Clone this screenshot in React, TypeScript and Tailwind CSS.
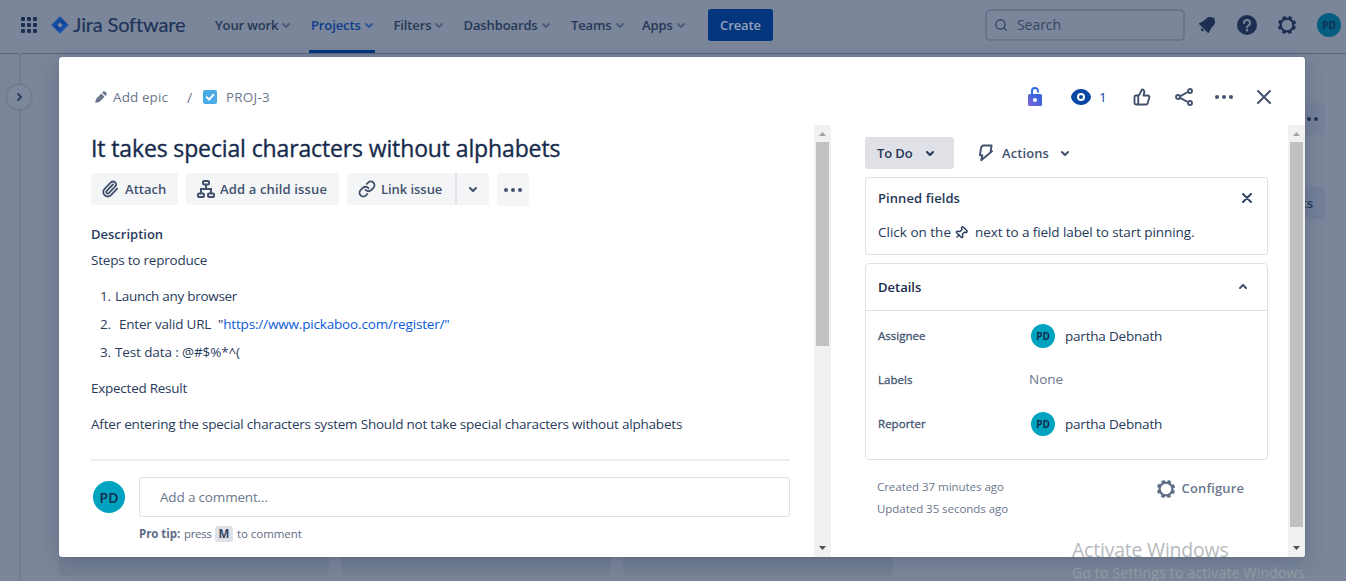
import type { ReactNode } from "react";
import { Link, Paperclip, Pin, Search, ThumbsUp } from "lucide-react";

function Chevron({ className = "", up = false }: { className?: string; up?: boolean }) {
  return (
    <svg viewBox="8 8 8 8" className={`h-2 w-2 shrink-0 fill-current ${up ? "rotate-180" : ""} ${className}`}>
      <path d="M8.292 10.293a1.009 1.009 0 000 1.419l2.939 2.965c.218.215.5.322.779.322s.556-.107.769-.322l2.93-2.955a1.01 1.01 0 000-1.419.987.987 0 00-1.406 0l-2.298 2.317-2.307-2.327a.99.99 0 00-1.406 0z" />
    </svg>
  );
}

function Gear({ className = "" }: { className?: string }) {
  return (
    <svg viewBox="0 0 20 20" className={`h-5 w-5 shrink-0 ${className}`} fill="none" stroke="currentColor">
      <circle cx="10" cy="10" r="6.4" strokeWidth="2.3" />
      <circle cx="10" cy="10" r="8" strokeWidth="2.2" strokeDasharray="3.5 2.783" transform="rotate(10 10 10)" />
    </svg>
  );
}

function Dots({ className = "" }: { className?: string }) {
  return (
    <svg viewBox="0 0 18 4" className={`h-1 w-[18px] shrink-0 fill-current ${className}`}>
      <circle cx="2" cy="2" r="2" />
      <circle cx="9" cy="2" r="2" />
      <circle cx="16" cy="2" r="2" />
    </svg>
  );
}

function NavItem({ width, active, children }: { width: string; active?: boolean; children: ReactNode }) {
  return (
    <div className={`relative flex h-full items-center pb-[3px] ${width} ${active ? "text-[#0c3c8c]" : "text-[#253858]"}`}>
      <span className="pt-0.5 text-[13px] font-semibold">{children}</span>
      <Chevron className={`ml-1 ${active ? "text-[#2d5799]" : "text-[#4d5d7b]"}`} />
      {active && <span className="absolute bottom-0 -left-0.5 h-[3px] w-[66px] bg-[#04357f]" />}
    </div>
  );
}

function TopBar() {
  return (
    <header className="flex h-[53px] items-center pb-[3px] pl-[21px] shadow-[0_1px_1px_rgba(60,72,100,0.45)]">
      <svg viewBox="0 0 16 16" className="h-4 w-4 shrink-0 fill-[#1c2f52]">
        {[0, 6, 12].map((y) => [0, 6, 12].map((x) => <rect key={`${x}-${y}`} x={x} y={y} width="4" height="4" rx="1" />))}
      </svg>
      <svg viewBox="0 0 18 18" className="ml-[14px] h-[18px] w-[18px] shrink-0">
        <defs>
          <linearGradient id="mark" x1="0" y1="0" x2="1" y2="1">
            <stop offset="0.3" stopColor="#144da3" />
            <stop offset="0.5" stopColor="#0c3f92" />
            <stop offset="0.75" stopColor="#1a56b0" />
          </linearGradient>
        </defs>
        <path d="M9 .6 17.4 9 9 17.4.6 9z" fill="url(#mark)" stroke="#1a56b0" strokeWidth=".6" strokeLinejoin="round" />
        <path d="M9 6.3 11.7 9 9 11.7 6.3 9z" fill="#7b869a" />
      </svg>
      <span className="-mt-0.5 ml-[4px] w-[142px] shrink-0 font-['Lato'] text-[20px] leading-6 tracking-[-0.15px] text-[#20345a] [-webkit-text-stroke:0.2px_currentColor]">Jira Software</span>
      <nav className="-mb-[3px] flex h-[53px] shrink-0 items-center tracking-[-0.12px]">
        <NavItem width="w-24">Your work</NavItem>
        <NavItem width="w-[82.5px]" active>Projects</NavItem>
        <NavItem width="w-[70px]">Filters</NavItem>
        <NavItem width="w-[107.5px]">Dashboards</NavItem>
        <NavItem width="w-[71px]">Teams</NavItem>
        <NavItem width="w-[66px]">Apps</NavItem>
      </nav>
      <button className="h-8 w-[65px] shrink-0 rounded-[3px] bg-[#04357f] pt-px text-[13px] font-semibold tracking-[-0.1px] text-[#98a3b8]">Create</button>
      <div className="ml-auto flex h-8 w-[200px] shrink-0 items-center rounded-[5px] border-2 border-[#69758b] pl-[7px] text-[#344563]">
        <Search className="h-[14px] w-[14px]" strokeWidth={2.2} />
        <span className="ml-[9px] pb-px text-[14px] tracking-[-0.06px]">Search</span>
      </div>
      <svg viewBox="0 0 24 24" className="ml-[10px] h-6 w-6 shrink-0 fill-[#1c2f52]">
        <path d="M6.485 17.669a2 2 0 002.829 0l-2.829-2.83a2 2 0 000 2.83zm4.897-12.191l-.725.725c-.782.782-2.21 1.813-3.206 2.311l-3.017 1.509c-.495.248-.584.774-.187 1.171l8.556 8.556c.398.396.922.313 1.171-.188l1.51-3.016c.494-.988 1.526-2.42 2.311-3.206l.725-.726a5.048 5.048 0 00.64-6.356 1.01 1.01 0 10-1.354-1.494c-.023.025-.046.049-.066.075a5.043 5.043 0 00-2.788-.84 5.036 5.036 0 00-3.57 1.478z" />
      </svg>
      <svg viewBox="0 0 20 20" className="ml-[18px] h-5 w-5 shrink-0">
        <circle cx="10" cy="10" r="10" fill="#1c2f52" />
        <path d="M7 8a3 3 0 1 1 4.3 2.7c-.8.4-1.3.8-1.3 1.9" fill="none" stroke="#7b869a" strokeWidth="2" strokeLinecap="round" />
        <circle cx="10" cy="15.3" r="1.2" fill="#7b869a" />
      </svg>
      <Gear className="ml-5 text-[#1c2f52]" />
      <span className="mr-[5px] ml-5 flex h-6 w-6 shrink-0 items-center justify-center rounded-full bg-[#045e7f] text-[10px] font-bold text-[#122c54]">PD</span>
    </header>
  );
}

function Board() {
  return (
    <div className="flex h-[528px]">
      <aside className="relative w-[21px] border-r-2 border-[#717c91]">
        <span className="absolute top-8 left-[7px] flex h-6 w-6 items-center justify-center rounded-full bg-[#7d889c] text-[#2c3e60] shadow-[0_0_2px_1px_rgba(80,92,118,0.4)]">
          <Chevron className="-rotate-90" />
        </span>
      </aside>
      <div className="flex flex-1 flex-col justify-between pr-[21px] pb-[5px] pl-[38px]">
        <div className="mt-[50px] flex flex-col items-end gap-[52px]">
          <span className="flex h-8 w-8 items-center justify-center rounded-[3px] bg-[#768198] text-[#1f3356]"><Dots /></span>
          <span className="flex h-8 w-[70px] items-center justify-end rounded-[3px] bg-[#747f98] pt-0.5 pr-3 text-[13px] font-semibold text-[#253858]">Insights</span>
        </div>
        <div className="flex gap-3">
          {["todo", "progress", "done"].map((c) => <div key={c} className="h-10 w-[270px] rounded-[5px] bg-[#747f93]" />)}
        </div>
      </div>
    </div>
  );
}

function ScrollBar({ thumb }: { thumb: string }) {
  return (
    <div className="flex w-[17px] shrink-0 flex-col items-center bg-[#f1f1f1]">
      <svg viewBox="0 0 17 17" className="h-[17px] w-[17px] shrink-0"><path d="M5 11h7L8.500 7z" fill="#a3a3a3" /></svg>
      <div className={`w-[13px] bg-[#c1c1c1] ${thumb}`} />
      <svg viewBox="0 0 17 17" className="mt-auto h-[17px] w-[17px] shrink-0"><path d="M5 6h7l-3.500 4z" fill="#505050" /></svg>
    </div>
  );
}

function IssueHeader() {
  return (
    <div className="flex h-[68px] shrink-0 items-center pt-3 pl-9 text-[#6b778c]">
      <svg viewBox="0 0 12 12" className="h-3 w-3 fill-current">
        <path d="M1.200 7.700 6.300 2.600l3.200 3.200-5.100 5.100L1 11.800c-.5.1-.8-.2-.7-.7zM7.200 1.700 8.300.6c.5-.5 1.200-.5 1.700 0l1.500 1.500c.5.5.5 1.200 0 1.700l-1.100 1.100z" />
      </svg>
      <span className="ml-1.5 w-[74px] text-[13.5px] tracking-[0.09px]">Add epic</span>
      <span className="w-4 text-[14px]">/</span>
      <svg viewBox="0 0 14 14" className="h-3.5 w-3.5">
        <rect width="14" height="14" rx="2" fill="#4bade8" />
        <path d="m3.800 7.300 2.300 2.300 4.200-4.800" fill="none" stroke="#fff" strokeWidth="2" strokeLinecap="round" strokeLinejoin="round" />
      </svg>
      <span className="ml-[9px] text-[13.5px] tracking-[0.2px]">PROJ-3</span>
      <div className="mr-[34px] ml-auto flex items-center text-[#42526e]">
        <svg viewBox="0 0 14 20" className="h-5 w-3.5">
          <defs>
            <linearGradient id="lock" x1="1" y1="0" x2="0" y2="1">
              <stop offset="0.3" stopColor="#3a63dc" />
              <stop offset="1" stopColor="#8467d8" />
            </linearGradient>
          </defs>
          <path d="M4 8.500V4.200a3 3 0 0 1 6-.3V5.500" fill="none" stroke="#2f6be6" strokeWidth="2" />
          <rect y="7" width="14" height="12" rx="1.500" fill="url(#lock)" />
          <circle cx="7" cy="13" r="2" fill="#fff" />
        </svg>
        <svg viewBox="0 0 20 16" className="ml-[29px] h-4 w-5">
          <path d="M10 0c6 0 10 5.300 10 8s-4 8-10 8S0 10.700 0 8s4-8 10-8z" fill="#0747a6" />
          <circle cx="10" cy="8" r="3" fill="none" stroke="#fff" strokeWidth="2" />
        </svg>
        <span className="ml-2 w-[34px] text-[13.5px] text-[#0747a6]">1</span>
        <ThumbsUp className="h-[18px] w-[18px]" strokeWidth={2.5} />
        <svg viewBox="0 0 18 18" className="ml-6 h-[18px] w-[18px]" fill="none" stroke="currentColor" strokeWidth="1.900">
          <path d="M5 8.300 12.800 4M5 9.800l7.800 4.200" />
          <circle cx="3" cy="9" r="2" /><circle cx="15" cy="3" r="2" /><circle cx="15" cy="15" r="2" />
        </svg>
        <Dots className="ml-[22px]" />
        <svg viewBox="0 0 14 14" className="ml-6 h-3.5 w-3.5" stroke="currentColor" strokeWidth="2" strokeLinecap="round"><path d="m1 1 12 12M13 1 1 13" /></svg>
      </div>
    </div>
  );
}

function IssueMain() {
  return (
    <main className="w-[755px] shrink-0 pr-6 pl-8 text-[13.5px] tracking-[-0.21px] text-[#2a3c5c]">
      <h1 className="flex h-12 items-center pb-0.5 text-[23px] font-medium tracking-[-0.13px] whitespace-nowrap text-[#172b4d] [-webkit-text-stroke:0.35px_currentColor]">It takes special characters without alphabets</h1>
      <div className="flex h-8 text-[13px] font-semibold tracking-[0.05px] text-[#42526e]">
        <button className="flex h-8 w-[87px] items-center rounded-[3px] bg-[#f4f5f7] pl-2.5">
          <Paperclip className="mr-1.5 h-[18px] w-[18px]" strokeWidth={2.4} /><span className="pt-0.5">Attach</span>
        </button>
        <button className="ml-2 flex h-8 w-[153px] items-center rounded-[3px] bg-[#f4f5f7] pl-[11px]">
          <svg viewBox="0 0 18 18" className="mr-[5px] h-[18px] w-[18px]" fill="none" stroke="currentColor" strokeWidth="2">
            <rect x="6" y="1" width="6" height="3.500" rx="1" />
            <rect x="1" y="13.500" width="6" height="3.500" rx="1" />
            <rect x="11" y="13.500" width="6" height="3.500" rx="1" />
            <path d="M9 4.500V9M4 13.500V9h10v4.500" />
          </svg>
          <span className="pt-0.5 tracking-[0.15px]">Add a child issue</span>
        </button>
        <button className="ml-2 flex h-8 w-[108px] items-center rounded-l-[3px] bg-[#f4f5f7] pl-[11px]">
          <Link className="mr-[5px] h-[18px] w-[18px]" strokeWidth={2.5} /><span className="pt-0.5 tracking-[-0.05px]">Link issue</span>
        </button>
        <button className="flex h-8 w-[34px] items-center justify-center rounded-r-[3px] border-l-2 border-[#dfe1e6] bg-[#f4f5f7]"><Chevron /></button>
        <button className="ml-2 flex h-[33px] w-8 items-center justify-center rounded-[3px] bg-[#f4f5f7]"><Dots /></button>
      </div>
      <h2 className="mt-[15px] flex h-7 items-center pt-0.5 text-[13px] font-semibold tracking-[0px]">Description</h2>
      <p className="mt-0.5 h-5 leading-5">Steps to reproduce</p>
      <ol className="mt-3 [&>li]:flex [&>li]:h-7 [&>li]:items-center [&>li>span]:w-6 [&>li>span]:shrink-0 [&>li>span]:pl-[9px]">
        <li><span>1.</span><div className="tracking-[-0.29px]">Launch any browser</div></li>
        <li><span>2.</span><div className="ml-1 w-[99px]">Enter valid URL</div><div className="tracking-[-0.17px]">"<a className="text-[#0b5bd9]">https://www.pickaboo.com/register/"</a></div></li>
        <li><span>3.</span><div className="tracking-[-0.12px]">Test data : @#$%*^(</div></li>
      </ol>
      <p className="mt-3 h-5 leading-5 tracking-[-0.26px]">Expected Result</p>
      <p className="mt-4 h-5 leading-5 whitespace-nowrap">After entering the special characters system Should not take special characters without alphabets</p>
      <div className="mt-[25px] h-0.5 bg-[#ebecf0]" />
      <div className="mt-4 flex items-center pl-0.5">
        <span className="flex h-8 w-8 items-center justify-center rounded-full bg-[#00a3bf] text-[14px] font-semibold tracking-normal text-[#172b4d]">PD</span>
        <div className="ml-3.5 flex h-10 flex-1 items-center rounded-[3px] border border-[#dfe1e6] pl-5 tracking-[-0.17px] text-[#6b778c]">Add a comment…</div>
      </div>
      <div className="mt-[7px] ml-12 flex h-5 items-center text-[11.5px] tracking-[-0.06px] text-[#5e6c84]">
        <b className="w-[45px] font-bold">Pro tip:</b>
        <span className="w-[31px] tracking-[-0.35px]">press</span>
        <b className="flex h-4 w-[18px] items-center justify-center rounded-[3px] bg-[#dfe1e6] text-[#344563]">M</b>
        <span className="ml-1">to comment</span>
      </div>
    </main>
  );
}

function Field({ label, children }: { label: string; children: ReactNode }) {
  return (
    <div className="flex h-11 items-center pl-3">
      <span className="w-[151px] text-[11.5px] font-medium tracking-[0.03px] text-[#42526e] [-webkit-text-stroke:0.3px_currentColor]">{label}</span>
      {children}
    </div>
  );
}

function Person() {
  return (
    <div className="flex items-center pl-0.5 text-[13.5px] tracking-[-0.2px]">
      <span className="mr-2.5 flex h-6 w-6 items-center justify-center rounded-full bg-[#00a3bf] text-[10px] font-bold tracking-normal text-[#172b4d]">PD</span>
      partha Debnath
    </div>
  );
}

function IssueSide() {
  return (
    <section className="w-[457px] shrink-0 pt-3 pr-5 pl-[34px] text-[#253858]">
      <div className="flex h-8 items-center text-[13px] font-semibold">
        <button className="flex h-8 w-[89px] items-center rounded-[3px] bg-[#dfe1e6] pl-3"><span className="w-[49px] pt-0.5 text-left tracking-[-0.1px]">To Do</span><Chevron /></button>
        <button className="flex items-center pl-6 text-[#42526e]">
          <svg viewBox="0 0 16 18" className="mr-2 h-[18px] w-4" fill="none" stroke="currentColor" strokeWidth="1.900" strokeLinejoin="round">
            <path d="M5 1.500h8.600L12.600 7.200H14L3.200 16.200 4.400 11.300H1.900L3.200 3.200z" />
          </svg>
          <span className="w-[59px] pt-0.5 text-left tracking-[0.1px]">Actions</span><Chevron />
        </button>
      </div>
      <div className="mt-2 h-[78px] w-[403px] rounded-[3px] border border-[#dfe1e6] px-3">
        <div className="flex h-10 items-center justify-between text-[13px] font-semibold">
          <span className="pt-0.5 tracking-[0.08px]">Pinned fields</span>
          <svg viewBox="0 0 10 10" className="mr-[3px] h-2.5 w-2.5 text-[#344563]" stroke="currentColor" strokeWidth="2" strokeLinecap="round"><path d="m1 1 8 8M9 1 1 9" /></svg>
        </div>
        <div className="flex h-7 items-center text-[13.5px] whitespace-nowrap">
          <span className="w-[76px]">Click on the</span>
          <Pin className="mt-0.5 h-[14px] w-[14px] rotate-45" strokeWidth={2.4} />
          <span className="ml-[7px] tracking-[-0.09px]">next to a field label to start pinning.</span>
        </div>
      </div>
      <div className="mt-2 h-[197px] w-[403px] rounded-[4px] border border-[#dfe1e6]">
        <div className="flex h-[47px] items-center justify-between border-b border-[#dfe1e6] pr-5 pl-3 text-[13px] font-semibold"><span className="pt-0.5 text-[#172b4d]">Details</span><Chevron up className="text-[#42526e]" /></div>
        <div className="pt-[3px]">
          <Field label="Assignee"><Person /></Field>
          <Field label="Labels"><span className="pb-0.5 text-[13.5px] text-[#6b778c]">None</span></Field>
          <Field label="Reporter"><Person /></Field>
        </div>
      </div>
      <div className="mt-4 flex w-[403px] justify-between pr-6 pl-3 text-[#6b778c]">
        <div className="text-[11.5px] leading-[22px] tracking-[-0.04px]"><p>Created 37 minutes ago</p><p>Updated 35 seconds ago</p></div>
        <div className="flex h-6 items-center pt-px text-[13px] font-semibold tracking-[0.12px]"><Gear className="mr-1.5 text-[#5e6c84]" /><span className="pt-px">Configure</span></div>
      </div>
    </section>
  );
}

export default function App() {
  return (
    <div className="relative h-[581px] w-[1346px] overflow-hidden bg-[#7b869a] font-['Open_Sans',sans-serif]">
      <TopBar />
      <Board />
      <div role="dialog" className="absolute top-[57px] left-[59px] flex h-[500px] w-[1246px] flex-col overflow-hidden rounded-[3px] bg-white shadow-[0_0_1px_rgba(9,30,66,0.4),0_4px_20px_rgba(9,30,66,0.22)]">
        <IssueHeader />
        <div className="flex h-[432px]">
          <IssueMain />
          <ScrollBar thumb="h-[204px]" />
          <IssueSide />
          <ScrollBar thumb="h-[385px]" />
        </div>
      </div>
      <div className="absolute top-[536px] left-[1072px] whitespace-nowrap">
        <p className="h-[27px] text-[19.5px] leading-7 tracking-[-0.22px] text-[#b7b9bc]">Activate Windows</p>
        <p className="text-[14px] leading-5 tracking-[0.2px] text-[#9399a2]">Go to Settings to activate Windows.</p>
      </div>
    </div>
  );
}
